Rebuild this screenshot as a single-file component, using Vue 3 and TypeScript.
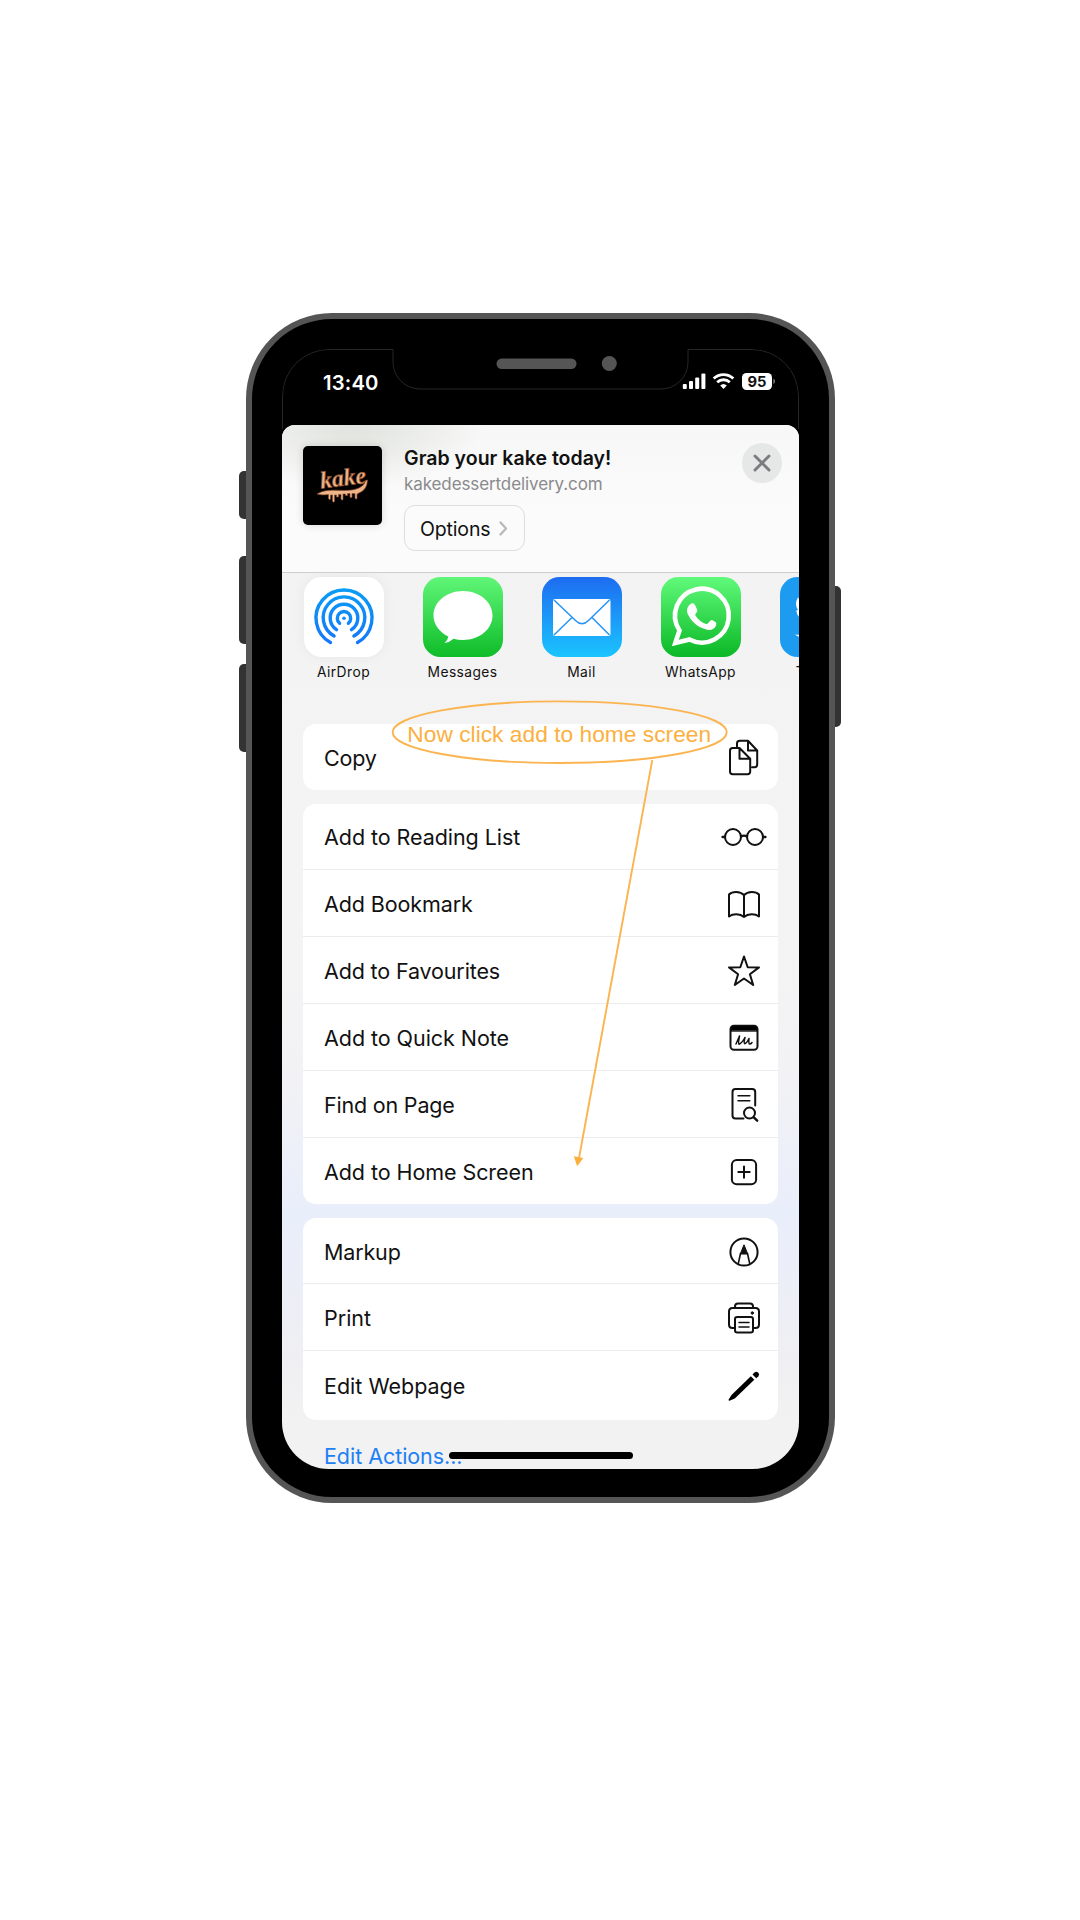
<script setup lang="ts">
interface Target { name: string; label: string; spacing: string }
interface Action { label: string; icon: string; spacing: string }

const targets: Target[] = [
  { name: 'airdrop', label: 'AirDrop', spacing: '0.45px' },
  { name: 'messages', label: 'Messages', spacing: '0.4px' },
  { name: 'mail', label: 'Mail', spacing: '0.4px' },
  { name: 'whatsapp', label: 'WhatsApp', spacing: '0.4px' },
  { name: 'twitter', label: 'Twitter', spacing: '0.4px' },
]

const groups: Action[][] = [
  [{ label: 'Copy', icon: 'copy', spacing: '-0.2px' }],
  [
    { label: 'Add to Reading List', icon: 'glasses', spacing: '-0.06px' },
    { label: 'Add Bookmark', icon: 'book', spacing: '-0.1px' },
    { label: 'Add to Favourites', icon: 'star', spacing: '-0.15px' },
    { label: 'Add to Quick Note', icon: 'note', spacing: '-0.05px' },
    { label: 'Find on Page', icon: 'find', spacing: '-0.2px' },
    { label: 'Add to Home Screen', icon: 'plus', spacing: '-0.07px' },
  ],
  [
    { label: 'Markup', icon: 'markup', spacing: '-0.15px' },
    { label: 'Print', icon: 'print', spacing: '0px' },
    { label: 'Edit Webpage', icon: 'pencil', spacing: '0px' },
  ],
]
</script>

<template>
  <main class="page">
    <div class="phone">
      <i class="key mute"></i><i class="key up"></i><i class="key down"></i><i class="key power"></i>
      <div class="screen">
        <svg class="outline" width="517" height="1120" viewBox="0 0 517 1120">
          <path d="M.5 80V47A46.500 46.500 0 0 1 47 .5H111V13A27 27 0 0 0 138 40H379A27 27 0 0 0 406 13V.5H470A46.500 46.500 0 0 1 516.500 47V80" fill="none" stroke="#303030" stroke-width=".8" />
          <rect x="214.500" y="9.500" width="80" height="10.500" rx="5.200" fill="#555" />
          <circle cx="327.300" cy="14.500" r="7.500" fill="#555" />
        </svg>
        <div class="status">
          <span class="time">13:40</span>
          <svg class="signals" width="94" height="20" viewBox="0 0 94 20">
            <g fill="#fff">
              <rect x=".8" y="12" width="4" height="5" rx="1" />
              <rect x="7" y="9" width="4" height="8" rx="1" />
              <rect x="13.200" y="5.500" width="4" height="11.500" rx="1" />
              <rect x="19.400" y="1.500" width="4" height="15.500" rx="1" />
              <path d="M41.500 17l-3.300-3.400a4.800 4.800 0 0 1 6.600 0z" />
              <rect x="60" y="1" width="30" height="17" rx="4.500" />
              <path d="M91.300 6.800c2.300.6 2.300 4.600 0 5.200z" fill="#777" />
            </g>
            <path d="M31.700 6.500a14.200 14.200 0 0 1 19.600 0M35.200 10.300a9.200 9.200 0 0 1 12.600 0" fill="none" stroke="#fff" stroke-width="2.900" />
            <text x="75" y="14.800" text-anchor="middle" textLength="19" lengthAdjust="spacingAndGlyphs" class="battery">95</text>
          </svg>
        </div>

        <section class="sheet">
          <header class="head">
            <div class="thumb">
              <svg width="79" height="79" viewBox="0 0 79 79">
                <g fill="#efb588" stroke="#8b4c2c" stroke-width=".7">
                  <path d="M14 48C26 40 43 48 56 42Q62 39 62.500 34.500L64.500 34Q64 44 56 47L54 48V52.500Q53 54 52 52V47.500H49V51Q48 52.500 47 51V47.500H44.500V49.500H42.500V48H40V53.500Q39 55 38 53V48.500H35.500V51H33.500V49H31.500V55.500Q30.500 57 29.500 55V49H27.500V53Q26.500 54.500 25.500 52.500V48.500Q20 49.500 14 48Z" />
                  <text x="18" y="42.500" textLength="46" lengthAdjust="spacingAndGlyphs" transform="rotate(-7 18 42.500)" class="logo">kake</text>
                </g>
              </svg>
            </div>
            <div class="meta">
              <h1>Grab your kake today!</h1>
              <p>kakedessertdelivery.com</p>
              <button class="options">
                <span>Options</span>
                <svg width="9" height="15" viewBox="0 0 9 15"><path d="M1.500 1.500l5.500 6-5.500 6" fill="none" stroke="#b9b9bc" stroke-width="2.300" stroke-linecap="round" stroke-linejoin="round" /></svg>
              </button>
            </div>
            <button class="close">
              <svg width="40" height="40" viewBox="0 0 40 40"><path d="M13 13l14 14M27 13L13 27" stroke="#7c7c80" stroke-width="2.900" stroke-linecap="round" /></svg>
            </button>
          </header>

          <div class="apps">
            <div v-for="t in targets" :key="t.name" class="app">
              <div class="tile" :class="t.name">
                <svg width="80" height="80" viewBox="0 0 80 80" fill="none">
                  <template v-if="t.name === 'airdrop'">
                    <defs><linearGradient id="air" gradientUnits="userSpaceOnUse" x1="0" y1="12" x2="0" y2="66"><stop stop-color="#0a9cf5" /><stop offset="1" stop-color="#1478fa" /></linearGradient></defs>
                    <g stroke="url(#air)" stroke-width="3.400" stroke-linecap="round">
                      <path d="M26.500 65.500A28 28 0 1 1 53.500 65.500" />
                      <path d="M30.100 59A20.800 20.800 0 1 1 49.900 59" />
                      <path d="M32.500 52.600A13.800 13.800 0 1 1 47.500 52.600" />
                      <path d="M35.600 46.300A6.700 6.700 0 1 1 44.400 46.300" />
                    </g>
                    <circle cx="40" cy="41.300" r="1.800" fill="#118cf8" />
                  </template>
                  <template v-else-if="t.name === 'messages'">
                    <path d="M40 14C56.500 14 69.500 25 69.500 38.500S56.500 63 40 63Q35 63 30.500 61.800Q26.500 65.500 21.500 66Q25 63 25.300 59.500C16 55 10.500 47 10.500 38.500C10.500 25 23.500 14 40 14Z" fill="#fff" />
                  </template>
                  <template v-else-if="t.name === 'mail'">
                    <rect x="11" y="22" width="57.500" height="37" rx="2" fill="#fff" />
                    <path d="M12 23L33.500 43.500Q40 50 46.500 43.500L67.500 23M12 58L30 40.500M67.500 58L50 40.500" stroke="#2594f7" stroke-width="1.500" />
                  </template>
                  <template v-else-if="t.name === 'whatsapp'">
                    <path d="M14.300 66L18.500 53.500A26.900 26.900 0 1 1 28.500 62.500Z" stroke="#fff" stroke-width="4.600" />
                    <path d="M29 27.500C30.500 25.800 33 25.800 34 28L36.300 33Q36.800 34.500 34.500 37Q34 38 34.700 39C37.500 43 41 45.500 45 47Q46.200 47.400 47 46.300L49.500 43.500Q50.300 42.700 51.500 43.200L54.900 45.200Q55.800 46 55 48.500C53.500 52.500 49 54 44.500 52.300C35 49.500 30 43.500 27 37.500C25 33.500 26.500 29.500 29 27.500Z" fill="#fff" />
                  </template>
                  <template v-else>
                    <path d="M18 20.500Q14 27 18 33L16.300 33.500Q16.500 38.500 21 41.500L24 42V26ZM14.500 57.200Q18 58.300 24 57V60.500Q20 61 14.500 57.200Z" fill="#fff" />
                  </template>
                </svg>
              </div>
              <span class="name" :style="{ letterSpacing: t.spacing }">{{ t.label }}</span>
            </div>
          </div>

          <div class="groups">
            <ul v-for="(g, i) in groups" :key="i" class="card">
              <li v-for="a in g" :key="a.label">
                <span :style="{ letterSpacing: a.spacing }">{{ a.label }}</span>
                <svg class="icon" width="48" height="44" viewBox="0 0 48 44" fill="none" stroke="#111" stroke-width="2" stroke-linecap="round" stroke-linejoin="round">
                  <template v-if="a.icon === 'copy'">
                    <path d="M17 10.500V7.500Q17 4.800 19.700 4.800H28L37.200 14.500V28.500Q37.200 31.200 34.500 31.200H32M28 4.800V14.500H37.200" />
                    <path d="M12.700 12H19.500L30.200 22.700V35.500Q30.200 38.200 27.500 38.200H12.700Q10 38.200 10 35.500V14.700Q10 12 12.700 12ZM19.500 12V22.700H30.200" />
                  </template>
                  <template v-else-if="a.icon === 'glasses'">
                    <circle cx="13" cy="22" r="8" /><circle cx="35" cy="22" r="8" />
                    <path d="M2.500 22H5M43 22h2.500M21 21.500Q24 19.800 27 21.500" stroke-width="2.300" />
                  </template>
                  <template v-else-if="a.icon === 'book'">
                    <path d="M24 13C20 9 12.500 9 9 12.500V34.500C13 31.500 20 31.500 24 35C28 31.500 35 31.500 39 34.500V12.500C35.500 9 28 9 24 13ZM24 13V35" />
                  </template>
                  <path v-else-if="a.icon === 'star'" d="M24 7.500L27.700 18.300L39 18.400L29.900 25.200L33.200 36L24 29.500L14.800 36L18.100 25.200L9 18.400L20.300 18.300Z" />
                  <template v-else-if="a.icon === 'note'">
                    <rect x="10.500" y="9.800" width="27" height="24" rx="3.500" />
                    <path d="M10.500 14.800V13Q10.500 9.800 14 9.800H34Q37.500 9.800 37.500 13V14.800Z" fill="#000" stroke-width="1" />
                    <path d="M16 28L19.500 20Q18 27.500 19 28.300Q22 27 25 21.500Q23.500 27 24.700 27.700Q27 27 29 22.500Q28.500 27.500 29.500 28Q31 28 32 26.500" stroke-width="1.500" />
                  </template>
                  <template v-else-if="a.icon === 'find'">
                    <path d="M23.500 35.500H15.500Q12.500 35.500 12.500 32.500V9Q12.500 6 15.500 6H32.200Q35.200 6 35.200 9V22.500" />
                    <path d="M18 12.800H29.800M18 17.800H29.800" stroke-width="1.500" /><circle cx="29.500" cy="30" r="5.500" />
                    <path d="M33.800 34.300L37.200 37.700" stroke-width="2.400" />
                  </template>
                  <template v-else-if="a.icon === 'plus'">
                    <rect x="11.900" y="10" width="24.200" height="24.200" rx="4.800" /><path d="M24 16.500V27.800M18.300 22.100H29.700" />
                  </template>
                  <template v-else-if="a.icon === 'markup'">
                    <circle cx="24" cy="22" r="13.600" /><path d="M18.200 34L20.500 23.500H27.500L29.800 34" stroke-width="1.600" /><path d="M20.500 23.500L24 14.800L27.500 23.500Z" fill="#111" stroke-width="1" />
                  </template>
                  <template v-else-if="a.icon === 'print'">
                    <path d="M15 12V10.500Q15 7.500 18 7.500H30Q33 7.500 33 10.500V12" />
                    <path d="M15 32H12.500Q9 32 9 28.500V15.500Q9 12 12.500 12H35.500Q39 12 39 15.500V28.500Q39 32 35.500 32H33" />
                    <rect x="15" y="21" width="18" height="15.500" rx="2.200" /><path d="M19 26.500H29M19 31H29" stroke-width="1.500" /><circle cx="32.300" cy="17" r="1.200" fill="#111" stroke-width="1" />
                  </template>
                  <g v-else fill="#000" stroke="none">
                    <path d="M30.800 12.300L34.300 15.800L14.800 34.500L9.500 36.700Q8.300 36.800 8.700 35.500L11.500 31Z" />
                    <path d="M32.500 10.500L34.500 8.500Q36.500 7 38.300 8.700Q40 10.500 38.400 12.300L36.200 14.200Z" />
                  </g>
                </svg>
              </li>
            </ul>
            <a class="edit">Edit Actions...</a>
          </div>
        </section>
        <i class="home"></i>
      </div>
    </div>

    <svg class="note" width="1080" height="1920" viewBox="0 0 1080 1920">
      <ellipse cx="559.700" cy="732.200" rx="167" ry="30.800" fill="none" stroke="#fbb450" stroke-width="1.900" />
      <text x="407.300" y="742.400" textLength="303.800">Now click add to home screen</text>
      <path d="M652.300 760L579 1158" stroke="#fbb450" stroke-width="1.900" />
      <path d="M573.800 1156.300L583.300 1158L577.200 1166.300Z" fill="#fbb03b" />
    </svg>
  </main>
</template>

<style>
body { margin: 0; background: #fff; }
</style>

<style scoped>
* { box-sizing: border-box; }
.page { position: relative; z-index: 0; width: 1080px; height: 1920px; padding: 313px 0 0 246px; overflow: hidden; background: #fff; font-family: Inter, "Liberation Sans", sans-serif; color: #111; }
.phone { position: relative; width: 589px; height: 1190px; padding: 30px; border: 6px solid #555; border-radius: 86px; background: #000; }
.key { position: absolute; left: -13px; width: 8px; background: #333; border-radius: 5px 0 0 5px; z-index: -1; }
.mute { top: 152px; height: 48px; }
.up { top: 237px; height: 88px; }
.down { top: 345px; height: 88px; }
.power { left: auto; right: -12px; top: 267px; height: 141px; border-radius: 0 5px 5px 0; }
.screen { position: relative; width: 517px; height: 1120px; overflow: hidden; border-radius: 47px; background: #000; }
.outline { position: absolute; left: 0; top: 0; }
.status { display: flex; justify-content: space-between; height: 76px; padding: 23px 22px 0 41px; }
.time { padding-top: 1px; color: #fff; font-size: 20.300px; line-height: 20px; font-weight: 600; letter-spacing: .15px; }
.signals { display: block; margin-right: 1px; }
.battery { font: 700 14.500px Inter, sans-serif; fill: #111; }
.sheet { display: flex; flex-direction: column; height: 1044px; border-radius: 13px 13px 0 0; overflow: hidden; background: linear-gradient(#f2f2f2 0, #f4f4f4 500px, #f2f2f5 650px, #e9eefb 790px, #efeff3 930px, #f2f2f2 1000px); }
.head { display: flex; flex: none; height: 148px; padding: 21px 17px 0 21px; border-bottom: 1px solid #cecece; background: radial-gradient(ellipse 130px 65px at 70px 0, #e0e2dd, transparent), linear-gradient(#f6f7f6, #fbfbfb 60%); }
.thumb { width: 79px; height: 79px; border-radius: 5px; background: #000; box-shadow: 0 0 9px rgba(0, 0, 0, .14); }
.thumb svg, .tile svg, .close svg { display: block; }
.logo { font: italic 700 24px "Liberation Serif", serif; }
.meta { width: 300px; margin-left: 22px; }
h1 { margin: 0; font-size: 19.500px; line-height: 24px; font-weight: 600; letter-spacing: .03px; white-space: nowrap; }
p { margin: 2px 0 0; font-size: 17px; line-height: 24px; color: #8a8a8d; letter-spacing: -.1px; white-space: nowrap; }
button { display: block; padding: 0; border: 0; font: inherit; color: inherit; }
.options { display: flex; align-items: center; gap: 9px; width: 121px; height: 46px; margin-top: 9px; padding: 1px 0 0 15px; border: 1px solid #dedee1; border-radius: 11px; background: #fbfbfb; font-size: 19.500px; letter-spacing: -.15px; }
.close { width: 40px; height: 40px; margin: -3px 0 0 auto; border-radius: 50%; background: #e6e7e7; }
.apps { display: flex; flex: none; gap: 39px; height: 150.500px; padding: 4px 0 0 22px; overflow: hidden; }
.app { flex: none; width: 80px; display: flex; flex-direction: column; align-items: center; }
.tile { width: 80px; height: 80px; border-radius: 17.500px; overflow: hidden; }
.airdrop { background: #fff; box-shadow: 0 0 14px rgba(0, 0, 0, .05); }
.messages { background: linear-gradient(#60f678, #0ebc28); }
.mail { background: linear-gradient(#1d6cf0, #1bc4ff); }
.whatsapp { background: linear-gradient(#60fa7a, #0bb826); }
.twitter { background: #1d9bf0; }
.name { margin: 5px 1px 0 0; font-size: 13.800px; line-height: 20px; white-space: nowrap; }
.groups { display: flex; flex-direction: column; gap: 13.300px; padding: 0 21px; }
.card { margin: 0; padding: 0; list-style: none; border-radius: 13px; background: #fff; }
.card li { display: flex; align-items: center; justify-content: space-between; height: 66.800px; padding: 2px 10.500px 0 21px; font-size: 21.500px; border-bottom: 1.300px solid #ededed; }
.card li:last-child { border-bottom: 0; }
.card:nth-child(3) li:last-child { height: 68.800px; padding-bottom: 2px; }
.icon { flex: none; }
.edit { margin-top: 8px; padding-left: 21px; font-size: 21.500px; line-height: 30px; color: #1d80f5; letter-spacing: -.05px; }
.home { position: absolute; left: 167px; top: 1103px; width: 184px; height: 7px; border-radius: 4px; background: #000; }
.note { position: absolute; left: 0; top: 0; pointer-events: none; }
.note text { font: 22.700px "Liberation Sans", Arial, sans-serif; fill: #fbb040; }
</style>
